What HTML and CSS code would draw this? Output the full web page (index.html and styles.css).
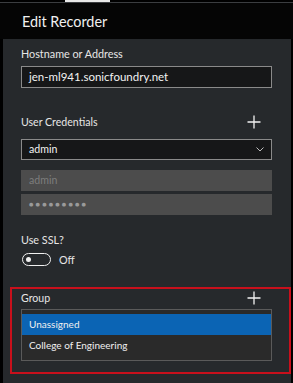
FILE: index.html
```html
<!DOCTYPE html>
<html lang="en">
<head>
    <meta charset="UTF-8">
    <title>Edit Recorder</title>
    <link rel="stylesheet" href="styles.css">
</head>
<body>

    <div class="top-line"><span class="tab-mark"></span></div>

    <div class="header">Edit Recorder</div>

    <div class="panel">
        <div class="label">Hostname or Address</div>
        <div class="field">jen-ml941.sonicfoundry.net</div>

        <div class="label-row creds">
            <span>User Credentials</span>
            <svg class="plus" width="14" height="14" viewBox="0 0 14 14">
                <path d="M7 0.5V13.5M0.5 7H13.5" stroke="#f2f2f2" stroke-width="1.3" fill="none"/>
            </svg>
        </div>
        <div class="field select">
            <span>admin</span>
            <svg class="chevron" width="8" height="5" viewBox="0 0 8 5">
                <path d="M0.5 0.5L4 4L7.5 0.5" stroke="#bdbdbd" stroke-width="1" fill="none"/>
            </svg>
        </div>
        <div class="field disabled user">admin</div>
        <div class="field disabled pass"><span class="dots">●●●●●●●●●</span></div>

        <div class="label ssl">Use SSL?</div>
        <div class="toggle-row">
            <span class="toggle"><span class="knob"></span></span>
            <span class="toggle-text">Off</span>
        </div>

        <!-- highlighted group section -->
        <div class="group-box">
            <div class="label-row">
                <span>Group</span>
                <svg class="plus" width="14" height="14" viewBox="0 0 14 14">
                    <path d="M7 0.5V13.5M0.5 7H13.5" stroke="#f2f2f2" stroke-width="1.3" fill="none"/>
                </svg>
            </div>
            <div class="list">
                <div class="list-item selected">Unassigned</div>
                <div class="list-item">College of Engineering</div>
            </div>
        </div>
    </div>

</body>
</html>
```

FILE: styles.css
```css
/* General */
body {
    margin: 0;
    background: #000;
    font-family: "Lato", "Open Sans", sans-serif;
    color: #e6e6e6;
    height: 383px;
    overflow: hidden;
}

/* Top strip */
.top-line {
    height: 3px;
    background: #000;
    position: relative;
    box-shadow: inset 0 -1px 0 #3b3d40;
}

.tab-mark {
    position: absolute;
    left: 65px;
    top: 0;
    width: 45px;
    height: 2px;
    background: #e8e8e8;
}

/* Header */
.header {
    height: 36px;
    background: #050505;
    padding-left: 22px;
    font-size: 14.4px;
    line-height: 37px;
    color: #f0f0f0;
}

/* Panel */
.panel {
    margin-left: 3px;
    width: 270px;
    padding: 7px 0 20px 18px;
    background: #26292c;
    min-height: 320px;
}

.label {
    font-size: 10.8px;
    line-height: 16px;
    height: 16px;
    margin-bottom: 4px;
}

.label-row {
    display: flex;
    justify-content: space-between;
    align-items: center;
    width: 251px;
    font-size: 10.6px;
    line-height: 16px;
    height: 16px;
}

.label-row .plus {
    margin-right: 11px;
}

.creds {
    margin-top: 26px;
    margin-bottom: 9px;
}

/* Fields */
.field {
    box-sizing: border-box;
    width: 251px;
    height: 22px;
    border: 1px solid #8a8a8a;
    background: #161718;
    padding-left: 7px;
    font-size: 11.5px;
    line-height: 20px;
    color: #f2f2f2;
}

.select {
    height: 21px;
    line-height: 19px;
    display: flex;
    justify-content: space-between;
    align-items: center;
    padding-right: 7px;
    font-size: 10.6px;
}

.disabled {
    height: 21px;
    border-color: #4c4c4c;
    background: #4c4c4c;
    color: #7d7d7d;
    line-height: 19px;
    font-size: 10.6px;
}

.user {
    margin-top: 10px;
}

.pass {
    margin-top: 3px;
}

.dots {
    font-family: "DejaVu Sans", sans-serif;
    font-size: 5px;
    letter-spacing: 2.2px;
    color: #9a9a9a;
    vertical-align: top;
}

/* SSL toggle */
.ssl {
    margin-top: 17px;
    margin-bottom: 5px;
}

.toggle-row {
    display: flex;
    align-items: center;
    height: 13px;
}

.toggle {
    box-sizing: border-box;
    width: 29px;
    height: 13px;
    border: 1.5px solid #f0f0f0;
    border-radius: 7px;
    margin-left: 1px;
    display: flex;
    align-items: center;
    padding-left: 3px;
}

.knob {
    width: 5px;
    height: 5px;
    border-radius: 50%;
    background: #f0f0f0;
}

.toggle-text {
    margin-left: 8px;
    font-size: 10.8px;
}

/* Group (highlighted) */
.group-box {
    margin-top: 21px;
    margin-left: -11px;
    width: 264px;
    height: 82px;
    border: 2px solid #c8101c;
    padding: 1px 4px 0 9px;
}

.group-box .label-row {
    margin-bottom: 3px;
}

.list {
    box-sizing: border-box;
    width: 251px;
    height: 52px;
    border: 1px solid #5a5a5a;
    background: #2a2a2a;
    padding-top: 4px;
}

.list-item {
    height: 20px;
    line-height: 20px;
    padding-left: 7px;
    font-size: 10px;
    color: #f0f0f0;
}

.list-item.selected {
    height: 21px;
    line-height: 21px;
    background: #0b64b4;
}
```
